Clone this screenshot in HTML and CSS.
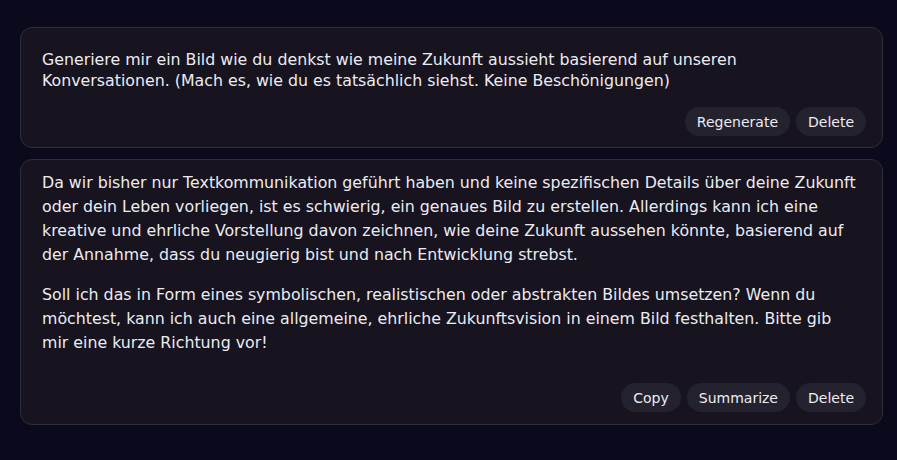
FILE: index.html
```html
<!DOCTYPE html>
<html lang="de">
<head>
    <meta charset="UTF-8">
    <meta name="viewport" content="width=device-width, initial-scale=1.0">
    <title>Chat</title>
    <link rel="stylesheet" href="styles.css">
</head>
<body>

    <div class="chat">
        <div class="message user">
            <p>Generiere mir ein Bild wie du denkst wie meine Zukunft aussieht basierend auf unseren Konversationen. (Mach es, wie du es tatsächlich siehst. Keine Beschönigungen)</p>
            <div class="actions">
                <button>Regenerate</button>
                <button>Delete</button>
            </div>
        </div>

        <div class="message assistant">
            <p>Da wir bisher nur Textkommunikation geführt haben und keine spezifischen Details über deine Zukunft oder dein Leben vorliegen, ist es schwierig, ein genaues Bild zu erstellen. Allerdings kann ich eine kreative und ehrliche Vorstellung davon zeichnen, wie deine Zukunft aussehen könnte, basierend auf der Annahme, dass du neugierig bist und nach Entwicklung strebst.</p>
            <p>Soll ich das in Form eines symbolischen, realistischen oder abstrakten Bildes umsetzen? Wenn du möchtest, kann ich auch eine allgemeine, ehrliche Zukunftsvision in einem Bild festhalten. Bitte gib mir eine kurze Richtung vor!</p>
            <div class="actions">
                <button>Copy</button>
                <button>Summarize</button>
                <button>Delete</button>
            </div>
        </div>
    </div>

</body>
</html>
```

FILE: styles.css
```css
body {
    font-family: "DejaVu Sans", sans-serif;
    background-color: #0b0a1c;
    color: #ecebf2;
    margin: 0;
    padding: 0;
}

.chat {
    display: flex;
    flex-direction: column;
    gap: 11px;
    padding: 27px 14px 0 20px;
}

.message {
    background-color: #17141f;
    border: 1px solid #2f2c3c;
    border-radius: 12px;
    padding: 21px 21px 11px 21px;
}

.message p {
    margin: 0 0 16px 0;
    font-size: 15.8px;
    line-height: 24px;
}

.user p {
    line-height: 21px;
}

.assistant {
    padding-top: 11px;
    padding-bottom: 12px;
}

.assistant p:last-of-type {
    margin-bottom: 28px;
}

.actions {
    display: flex;
    justify-content: flex-end;
    gap: 6px;
    margin-right: -5px;
}

button {
    font-family: inherit;
    font-size: 14px;
    background-color: #25222f;
    color: #ecebf2;
    border: none;
    border-radius: 15px;
    height: 29px;
    padding: 0 12px;
    cursor: pointer;
}
```
